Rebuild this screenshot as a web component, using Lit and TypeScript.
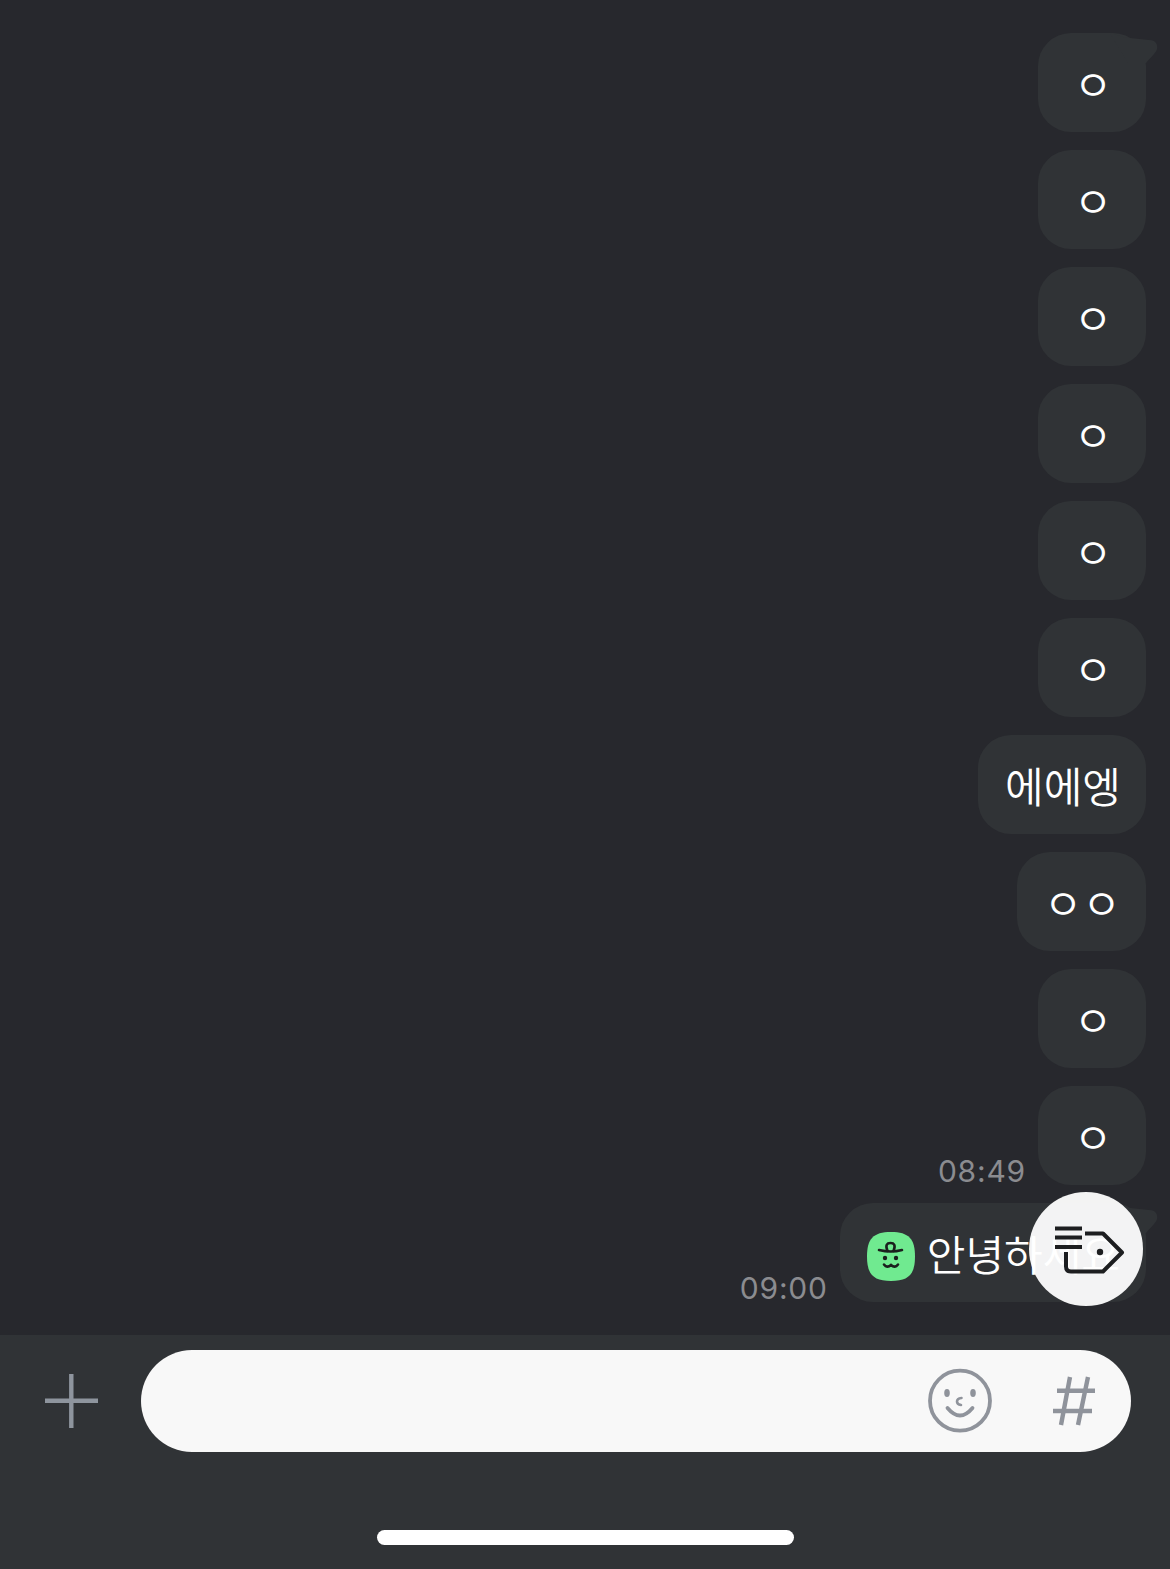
import { LitElement, html, css, svg } from "lit";
import { customElement } from "lit/decorators.js";

const tail = svg`<svg class="tail" width="122" height="34" viewBox="0 0 122 34"><path d="M72 0C82 2 85 5 92 5L111 7C118 7 120 12 119 16C118 20 113 24 108 30L90 30Z" fill="#303336"/></svg>`;

@customElement("app-root")
export class AppRoot extends LitElement {
  static styles = css`
    :host { display: block; width: 1170px; height: 1569px; background: #27282d; overflow: hidden; font-family: "Noto Sans CJK KR", "Noto Sans", sans-serif; position: relative; }
    .list { height: 1335px; box-sizing: border-box; padding: 33px 24px 0 0; display: flex; flex-direction: column; align-items: flex-end; gap: 18px; }
    .row { display: flex; align-items: flex-end; gap: 12px; }
    .bubble { position: relative; box-sizing: border-box; height: 99px; min-width: 108px; padding: 0 26px; border-radius: 33px; background: #303336; color: #fff; font-size: 42px; font-weight: 350; line-height: 99px; display: flex; align-items: center; justify-content: center; white-space: nowrap; }
    .bubble.rich { padding: 0 27px; gap: 11px; }
    .msg { display: block; position: relative; left: 1px; }
    .tail { position: absolute; top: 0; right: -14px; }
    .time { font-family: Inter, "Liberation Sans", sans-serif; font-size: 30px; line-height: 34px; letter-spacing: 0.8px; color: #8b8c90; margin-bottom: -3px; }
    .bot { flex: none; width: 48px; height: 49px; margin-top: 8px; }
    .fab { position: absolute; left: 1029px; top: 1192px; width: 114px; height: 114px; border-radius: 50%; background: rgba(255,255,255,.945); }
    .fab svg { display: block; }
    .bar { height: 234px; background: #303336; display: flex; flex-direction: column; align-items: center; }
    .composer { width: 100%; height: 117px; padding-top: 15px; box-sizing: border-box; display: flex; align-items: flex-start; }
    .plus { width: 141px; height: 102px; flex: none; display: block; }
    .input { width: 990px; height: 102px; border-radius: 51px; background: #f8f8f8; flex: none; display: flex; justify-content: flex-end; }
    .input svg { display: block; }
    .home { margin-top: 78px; width: 417px; height: 15px; border-radius: 8px; background: #fff; }
  `;

  private bubble(text: string, withTail = false) {
    return html`<div class="bubble">${withTail ? tail : ""}<span class="msg">${text}</span></div>`;
  }

  render() {
    return html`
      <div class="list">
        <div class="row">${this.bubble("ㅇ", true)}</div>
        <div class="row">${this.bubble("ㅇ")}</div>
        <div class="row">${this.bubble("ㅇ")}</div>
        <div class="row">${this.bubble("ㅇ")}</div>
        <div class="row">${this.bubble("ㅇ")}</div>
        <div class="row">${this.bubble("ㅇ")}</div>
        <div class="row">${this.bubble("에에엥")}</div>
        <div class="row">${this.bubble("ㅇㅇ")}</div>
        <div class="row">${this.bubble("ㅇ")}</div>
        <div class="row"><span class="time">08:49</span>${this.bubble("ㅇ")}</div>
        <div class="row">
          <span class="time">09:00</span>
          <div class="bubble rich">
            ${tail}
            <svg class="bot" viewBox="0 0 48 49">
              <path d="M24 0C42 0 48 7 48 24.5C48 42 42 49 24 49C6 49 0 42 0 24.5C0 7 6 0 24 0Z" fill="#70ea90"/>
              <g fill="none" stroke="#1b1f1d" stroke-width="2.6" stroke-linecap="round">
                <path d="M12 18Q24 21 35 18"/>
                <path d="M20.5 19C18 13 20 11 23.5 11C27 11 29 13 26.5 19"/>
                <path d="M17 32.5Q20 36.5 24 33Q28 36.5 31 32.5"/>
              </g>
              <circle cx="18" cy="26" r="2.2" fill="#1b1f1d"/>
              <circle cx="29" cy="26" r="2.2" fill="#1b1f1d"/>
            </svg>
            <span class="msg">안녕하세요</span>
          </div>
        </div>
      </div>
      <div class="fab">
        <svg width="114" height="114" viewBox="0 0 114 114" fill="none" stroke="#1d1e20" stroke-width="4">
          <path d="M26 36.5H53M26 45.5H53M26 55H53"/>
          <path d="M56 41.5H74L93 60.5L74 79.5H42Q37 79.5 37 74.5V60" stroke-linejoin="round"/>
          <circle cx="71" cy="60" r="3.2" fill="#1d1e20" stroke="none"/>
        </svg>
      </div>
      <div class="bar">
        <div class="composer">
          <svg class="plus" viewBox="0 0 141 102" fill="none" stroke="#8e959e" stroke-width="4.4">
            <path d="M45 50.7H98M71.3 24V78"/>
          </svg>
          <div class="input">
            <svg width="250" height="102" viewBox="0 0 250 102" fill="none" stroke="#8f939b" stroke-width="3.8" stroke-linecap="round">
              <circle cx="79" cy="50.7" r="30"/>
              <ellipse cx="66" cy="43" rx="2.8" ry="4" fill="#8f939b" stroke="none"/>
              <ellipse cx="92" cy="43" rx="2.8" ry="4" fill="#8f939b" stroke="none"/>
              <path d="M80.5 48Q76 48.5 76 51.5Q76 54.5 80 55" stroke-width="2.6"/>
              <path d="M66.5 58Q79 73 91.5 58"/>
              <g stroke-linecap="butt" stroke-width="4.4">
                <path d="M176 40.7H214M172 61H211"/>
                <path d="M189 27L180 75M207 27L197 75"/>
              </g>
            </svg>
          </div>
        </div>
        <div class="home"></div>
      </div>
    `;
  }
}
